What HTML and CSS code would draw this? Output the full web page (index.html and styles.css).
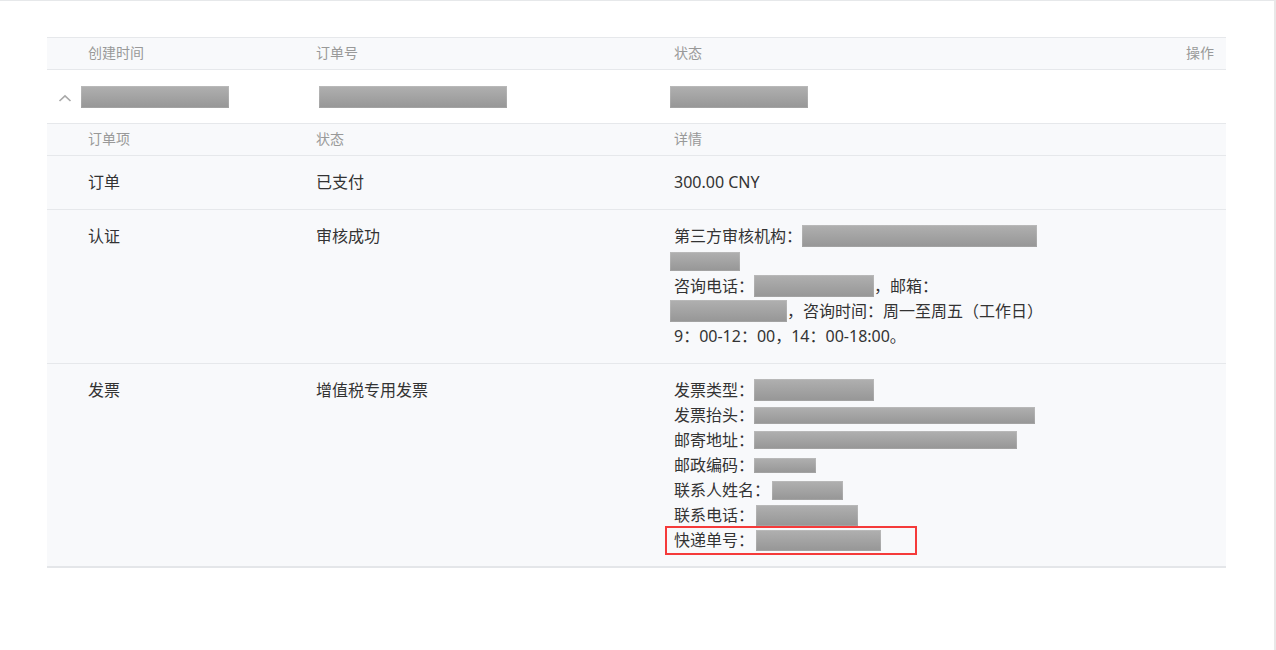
FILE: index.html
```html
<!DOCTYPE html>
<html lang="zh-CN">
<head>
<meta charset="utf-8">
<title>订单详情</title>
<link rel="stylesheet" href="styles.css">
</head>
<body>
<div class="page">
  <div class="table">
    <div class="head">
      <div>创建时间</div>
      <div>订单号</div>
      <div>状态</div>
      <div class="op">操作</div>
    </div>
    <div class="order">
      <div class="chev">
        <svg width="14" height="8" viewBox="0 0 14 8"><polyline points="1.5,7 7,1.8 12.5,7" fill="none" stroke="#a8a8a8" stroke-width="1.6"/></svg>
      </div>
      <div><span class="rd" style="width:148px;height:22px"></span></div>
      <div><span class="rd" style="width:188px;height:22px"></span></div>
      <div><span class="rd" style="width:138px;height:22px"></span></div>
    </div>
    <div class="subhead">
      <div>订单项</div>
      <div>状态</div>
      <div>详情</div>
    </div>
    <div class="item">
      <div>订单</div>
      <div>已支付</div>
      <div class="detail">300.00 CNY</div>
    </div>
    <div class="item">
      <div>认证</div>
      <div>审核成功</div>
      <div class="detail wrap">第三方审核机构：<span class="rd" style="width:235px;height:22px"></span><span class="rd lead" style="width:70px;height:19px"></span><br>咨询电话：<span class="rd" style="width:120px;height:22px"></span>，邮箱：<span class="rd lead" style="width:117px;height:22px"></span>，咨询时间：周一至周五（工作日）9：00-12：00，14：00-18:00。</div>
    </div>
    <div class="item last">
      <div>发票</div>
      <div>增值税专用发票</div>
      <div class="detail">
        <div>发票类型：<span class="rd" style="width:120px;height:22px"></span></div>
        <div>发票抬头：<span class="rd" style="width:281px;height:17px"></span></div>
        <div>邮寄地址：<span class="rd" style="width:263px;height:18px"></span></div>
        <div>邮政编码：<span class="rd" style="width:62px;height:15px"></span></div>
        <div>联系人姓名：<span class="rd gap" style="width:71px;height:19px"></span></div>
        <div>联系电话：<span class="rd gap" style="width:102px;height:21px"></span></div>
        <div><span class="hl">快递单号：<span class="rd gap" style="width:125px;height:21px"></span></span></div>
      </div>
    </div>
  </div>
</div>
</body>
</html>
```
FILE: styles.css
```css
*, *::before, *::after {
  box-sizing: border-box;
  margin: 0;
  padding: 0;
}
html, body {
  background: #fff;
}
body {
  font-family: "Noto Sans", "Noto Sans CJK SC", sans-serif;
  color: #333;
}
.page {
  height: 650px;
  border-top: 1px solid #e6e8ea;
  border-right: 2px solid #e8e8e8;
  padding: 36px 0 0 47px;
}
.table {
  width: 1179px;
}
.head,
.subhead {
  display: grid;
  grid-template-columns: 228px 358px 1fr auto;
  align-items: center;
  padding: 0 12px 3px 41px;
  background: #f8f9fb;
  border-bottom: 1px solid #e6e8eb;
  font-size: 14px;
  color: #999;
}
.head {
  height: 33px;
  border-top: 1px solid #e6e8eb;
}
.subhead {
  height: 32px;
}
.op {
  text-align: right;
}
.order {
  display: grid;
  grid-template-columns: 34px 238px 351px 1fr;
  align-items: center;
  height: 54px;
  background: #fff;
  border-bottom: 1px solid #e6e8eb;
}
.chev {
  padding-left: 11px;
  display: flex;
  align-items: center;
  padding-top: 2px;
}
.item {
  display: grid;
  grid-template-columns: 228px 358px 1fr;
  align-items: start;
  padding: 14px 0 14px 41px;
  background: #f8f9fb;
  border-bottom: 1px solid #e6e8eb;
  font-size: 16px;
  line-height: 25px;
}
.item.last {
  padding-bottom: 13px;
  border-bottom: 2px solid #e4e6e9;
}
.detail.wrap {
  width: 372px;
}
.rd {
  display: inline-block;
  vertical-align: middle;
  margin-top: -3px;
  background: linear-gradient(to bottom, #b0b0b0, #969696);
  box-shadow: inset 0 0 0 1px rgba(255, 255, 255, 0.12);
}
.order .rd {
  margin-top: -1px;
}
.rd.lead {
  margin-left: -4px;
}
.rd.gap {
  margin-left: 2px;
}
.hl {
  position: relative;
  display: inline-block;
}
.hl::after {
  content: "";
  position: absolute;
  left: -9px;
  top: -2px;
  width: 252px;
  height: 29px;
  border: 2px solid #f53a3a;
}
```
